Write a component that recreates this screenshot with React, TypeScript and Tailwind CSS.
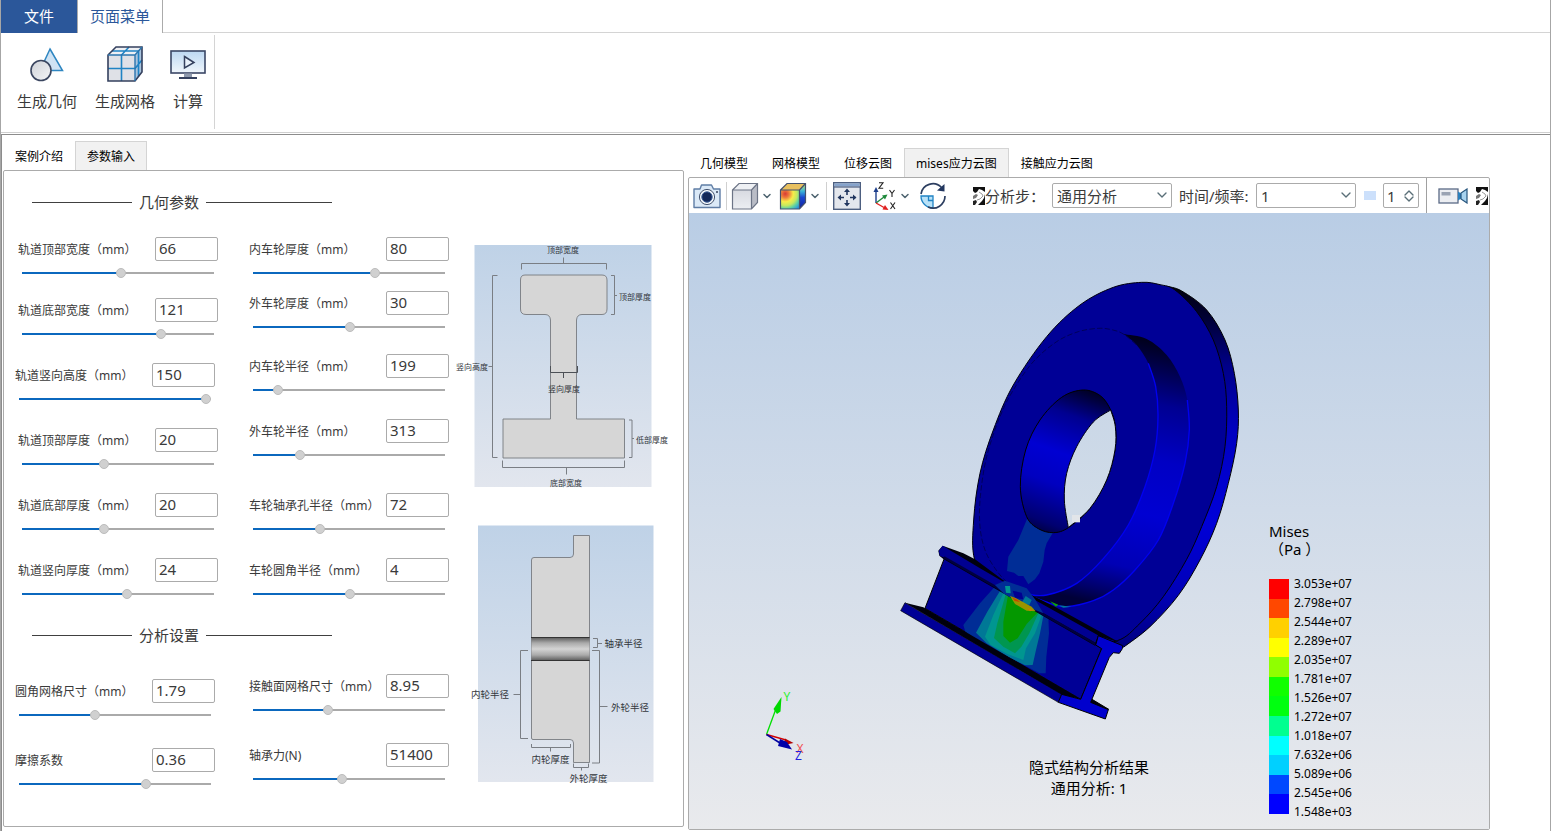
import { useId, useState } from 'react';
import type { ReactNode } from 'react';
import { ChevronDown, ChevronUp } from 'lucide-react';

type Point = [number, number];

/** Catmull-Rom spline through the points, written as cubic Bezier segments. */
function smooth(points: Point[], closed = false): string {
  const n = points.length;
  const at = (i: number): Point =>
    closed ? points[(i + n) % n] : points[Math.max(0, Math.min(n - 1, i))];
  let d = `M${points[0][0]} ${points[0][1]}`;
  const count = closed ? n : n - 1;
  for (let i = 0; i < count; i++) {
    const [a, b, c, e] = [at(i - 1), at(i), at(i + 1), at(i + 2)];
    d += `C${b[0] + (c[0] - a[0]) / 6} ${b[1] + (c[1] - a[1]) / 6} ${c[0] - (e[0] - b[0]) / 6} ${
      c[1] - (e[1] - b[1]) / 6
    } ${c[0]} ${c[1]}`;
  }
  return closed ? d + 'Z' : d;
}

/* ---------- icons ---------- */

function GeometryIcon() {
  return (
    <svg viewBox="0 0 36 36" className="size-9" aria-hidden="true">
      <defs>
        <linearGradient id="geoBall" x1="0" y1="0" x2="1" y2="1">
          <stop offset="0" stopColor="#cfd2d8" />
          <stop offset="1" stopColor="#f4f5f7" />
        </linearGradient>
      </defs>
      <path d="M21 3 L33.500 24.500 H11 Z" fill="#cfe3f4" stroke="#2e86c1" strokeWidth="1.500" />
      <circle cx="12" cy="24.500" r="10" fill="url(#geoBall)" stroke="#3b4660" strokeWidth="1.600" />
    </svg>
  );
}

function MeshIcon() {
  return (
    <svg viewBox="0 0 36 36" className="size-9" aria-hidden="true">
      <path d="M1 9 L9 1 H35 L28 9 Z" fill="#eef0f4" />
      <path d="M1 9 H28 V35 H1 Z" fill="#dfe1e7" />
      <path d="M28 9 L35 1 V26 L28 35 Z" fill="#a9c4de" />
      <path
        d="M14.500 35 V9 L22 1 M1 22.500 H28 L35 14 M5 5 H31.500 V30.500"
        fill="none"
        stroke="#1f83c4"
        strokeWidth="1.600"
      />
      <path
        d="M1 9 L9 1 H35 V26 L28 35 H1 Z"
        fill="none"
        stroke="#34405e"
        strokeWidth="1.600"
      />
      <path d="M1 9 H28 V35 M28 9 L35 1" fill="none" stroke="#2b75ae" strokeWidth="1.400" />
    </svg>
  );
}

function ComputeIcon() {
  return (
    <svg viewBox="0 0 36 36" className="size-9" aria-hidden="true">
      <defs>
        <linearGradient id="screen" x1="0" y1="0" x2="0" y2="1">
          <stop offset="0" stopColor="#bcd8f2" />
          <stop offset="1" stopColor="#f0f6fc" />
        </linearGradient>
      </defs>
      <rect x="1" y="5" width="34" height="22" fill="url(#screen)" stroke="#3a4766" strokeWidth="1.600" />
      <path d="M14.500 10.500 L24 16.500 L14.500 22 Z" fill="#e8f1fb" stroke="#34405e" strokeWidth="1.500" />
      <path d="M14 27.500 H22 V31 H14 Z" fill="#8e99ad" />
      <path d="M9 32 H27" stroke="#34405e" strokeWidth="2" />
    </svg>
  );
}

function CameraIcon() {
  return (
    <svg viewBox="0 0 28 26" className="h-[26px] w-7" aria-hidden="true">
      <path
        d="M1 6 H7 L8.500 2 H18.500 L20.500 6 H27 V24.500 H1 Z"
        fill="#dbe9f7"
        stroke="#5f7da5"
        strokeWidth="1.400"
        strokeLinejoin="round"
      />
      <circle cx="14" cy="14" r="7.600" fill="#f3f7fb" stroke="#44536f" strokeWidth="1" />
      <circle cx="14" cy="14" r="5.200" fill="#14295a" stroke="#3d5f98" strokeWidth="1" />
      <circle cx="24" cy="9" r="1" fill="#34405e" />
    </svg>
  );
}

function CubeIcon({ colored = false }: { colored?: boolean }) {
  return (
    <svg viewBox="0 0 28 28" className="size-7" aria-hidden="true">
      <defs>
        <radialGradient id="stress" cx="0.250" cy="0.200" r="1">
          <stop offset="0" stopColor="#d83a34" />
          <stop offset="0.200" stopColor="#ee7a3c" />
          <stop offset="0.420" stopColor="#f7ec4a" />
          <stop offset="0.620" stopColor="#c4e860" />
          <stop offset="0.800" stopColor="#58cfa8" />
          <stop offset="1" stopColor="#2a90e0" />
        </radialGradient>
        <linearGradient id="stressSide" x1="0" y1="0" x2="0" y2="1">
          <stop offset="0" stopColor="#d8e45a" />
          <stop offset="0.300" stopColor="#3ab6d8" />
          <stop offset="0.550" stopColor="#1a48d0" />
          <stop offset="1" stopColor="#1020a0" />
        </linearGradient>
        <linearGradient id="plainFace" x1="0" y1="0" x2="0" y2="1">
          <stop offset="0" stopColor="#d8dae1" />
          <stop offset="1" stopColor="#eceef2" />
        </linearGradient>
      </defs>
      <path d="M1.500 8 L8 1.500 H26.500 L20.500 8 Z" fill={colored ? '#e8c060' : '#eef0f4'} />
      <path d="M1.500 8 H20.500 V27 H1.500 Z" fill={colored ? 'url(#stress)' : 'url(#plainFace)'} />
      <path d="M20.500 8 L26.500 1.500 V20.500 L20.500 27 Z" fill={colored ? 'url(#stressSide)' : '#b9bcc6'} />
      <path
        d="M1.500 8 L8 1.500 H26.500 V20.500 L20.500 27 H1.500 Z M1.500 8 H20.500 V27 M20.500 8 L26.500 1.500"
        fill="none"
        stroke={colored ? '#44506c' : '#6c7486'}
        strokeWidth="1.200"
      />
    </svg>
  );
}

function FitIcon() {
  return (
    <svg viewBox="0 0 28 28" className="size-7" aria-hidden="true">
      <rect x="0.700" y="0.700" width="26.600" height="26.600" fill="#e4e7ed" stroke="#4d5f80" strokeWidth="1.400" />
      <rect x="1.400" y="1.400" width="25.200" height="3" fill="#86a3cb" />
      <path d="M1 5 H27" stroke="#4d5f80" strokeWidth="1.200" />
      <path d="M14 8 V13 M14 18 V23 M6 15.500 H11 M17 15.500 H22.500" stroke="#22365f" strokeWidth="1.600" />
      <path
        d="M14 6.500 L17 10 H11 Z M14 24.500 L17 21 H11 Z M4.500 15.500 L8 12.500 V18.500 Z M23.500 15.500 L20 12.500 V18.500 Z"
        fill="#22365f"
      />
    </svg>
  );
}

function AxesIcon() {
  return (
    <svg viewBox="0 0 24 28" className="h-7 w-6" aria-hidden="true">
      <path d="M3 21 V8" stroke="#1d3f8c" strokeWidth="1.400" />
      <path d="M3 5 L5.500 10 H0.500 Z" fill="#1d3f8c" />
      <path d="M3 21 L11 15" stroke="#1f8a3c" strokeWidth="1.400" />
      <path d="M14.500 12.500 L12 17.500 L9 13.500 Z" fill="#1f8a3c" />
      <path d="M3 21 L11 25.500" stroke="#e02020" strokeWidth="1.400" />
      <path d="M15.500 28 L9.500 27.500 L12 23 Z" fill="#e02020" />
      <path
        d="M6 0.800 H10 L6 6.200 H10.200 M16.500 8 L19 11.500 V15 M21.500 8 L19 11.500 M17.500 20.500 L22 27 M22 20.500 L17.500 27"
        fill="none"
        stroke="#222"
        strokeWidth="1.100"
      />
    </svg>
  );
}

function RotateIcon() {
  return (
    <svg viewBox="0 0 28 28" className="size-7" aria-hidden="true">
      <path d="M2 14 H14 V26 A12 12 0 0 1 2 14 Z" fill="#b9e2f8" stroke="#1f83c4" strokeWidth="1.300" />
      <path d="M9.500 14 V18.500 H14" fill="none" stroke="#1f83c4" strokeWidth="1.300" />
      <path d="M2 12 A12 12 0 0 1 22.500 5.500" fill="none" stroke="#2c3e60" strokeWidth="1.700" />
      <path d="M25.500 2 L25.500 9.500 L18 8.500 Z" fill="#22365f" />
      <path d="M26 14 A12 12 0 0 1 9 25" fill="none" stroke="#2c3e60" strokeWidth="1.700" />
    </svg>
  );
}

function NoiseIcon() {
  return (
    <svg viewBox="0 0 12 18" className="h-[18px] w-3 shrink-0" aria-hidden="true">
      <rect width="12" height="18" fill="#fff" />
      <path d="M0 0 H12 V5 L9 3 L6 2 L4 5 L2 6 L0 4 Z" fill="#111" />
      <path d="M12 7 V18 H5 L9 14 L11 11 Z" fill="#111" />
      <path d="M0 9 L3 7 L5 8 L3 11 L0 12 Z" fill="#777" />
      <path d="M0 14 L3 13 L4 15 L2 18 H0 Z" fill="#222" />
      <path d="M6 5 L9 7 L10 9 L7 12 L4 13" fill="none" stroke="#999" strokeWidth="1" />
    </svg>
  );
}

function VideoIcon() {
  return (
    <svg viewBox="0 0 30 16" className="h-4 w-[30px]" aria-hidden="true">
      <rect x="1" y="1" width="19" height="14" fill="#eceef2" stroke="#5b6a86" strokeWidth="1.300" />
      <rect x="3.500" y="4" width="9" height="3.500" fill="#9aa3b3" />
      <path d="M20 3.500 L24 6 V10 L20 12.500 Z" fill="#2a80bd" />
      <path d="M29 1 V15 L23 11 V5 Z" fill="#a8d3ef" stroke="#26547c" strokeWidth="1.200" />
    </svg>
  );
}

/* ---------- parameter form ---------- */

interface Param {
  label: string;
  value: string;
  /** slider position, 0 to 100 */
  pos: number;
  gap?: string;
  outdent?: boolean;
}

const trackLeft: Param[] = [
  { label: '轨道顶部宽度（mm）', value: '66', pos: 51.5 },
  { label: '轨道底部宽度（mm）', value: '121', pos: 73.5, gap: 'mt-[17px]' },
  { label: '轨道竖向高度（mm）', value: '150', pos: 100, gap: 'mt-[21px]', outdent: true },
  { label: '轨道顶部厚度（mm）', value: '20', pos: 42.5, gap: 'mt-[21px]' },
  { label: '轨道底部厚度（mm）', value: '20', pos: 42.5, gap: 'mt-[21px]' },
  { label: '轨道竖向厚度（mm）', value: '24', pos: 55, gap: 'mt-[21px]' },
];

const wheelRight: Param[] = [
  { label: '内车轮厚度（mm）', value: '80', pos: 64.5 },
  { label: '外车轮厚度（mm）', value: '30', pos: 50.5, gap: 'mt-[10px]' },
  { label: '内车轮半径（mm）', value: '199', pos: 11, gap: 'mt-[19px]' },
  { label: '外车轮半径（mm）', value: '313', pos: 23, gap: 'mt-[21px]' },
  { label: '车轮轴承孔半径（mm）', value: '72', pos: 34, gap: 'mt-[30px]' },
  { label: '车轮圆角半径（mm）', value: '4', pos: 50.5, gap: 'mt-[21px]' },
];

const analysisLeft: Param[] = [
  { label: '圆角网格尺寸（mm）', value: '1.79', pos: 39, outdent: true },
  { label: '摩擦系数', value: '0.36', pos: 67, gap: 'mt-[25px]', outdent: true },
];

const analysisRight: Param[] = [
  { label: '接触面网格尺寸（mm）', value: '8.95', pos: 38.5 },
  { label: '轴承力(N)', value: '51400', pos: 46, gap: 'mt-[25px]' },
];

function Field({ label, value, pos, gap = '', outdent = false }: Param) {
  const id = useId();
  const [text, setText] = useState(value);
  const [slider, setSlider] = useState(pos);
  const stop = `calc(5px + (100% - 10px) * ${slider / 100})`;
  return (
    <div className={`w-[200px] ${outdent ? '' : 'ml-[3px]'} ${gap}`}>
      <div className="flex h-6 items-center justify-between">
        <label htmlFor={id} className="whitespace-nowrap pt-[2px] text-[12px] leading-6">
          {label}
        </label>
        <input
          id={id}
          value={text}
          onChange={(e) => setText(e.target.value)}
          className="h-6 w-[63px] shrink-0 rounded-[2px] border border-[#ababab] bg-white px-[3px] pb-[2px] text-[15px] leading-5 outline-none"
        />
      </div>
      <input
        type="range"
        min={0}
        max={100}
        step={0.5}
        value={slider}
        aria-label={label}
        onChange={(e) => setSlider(Number(e.target.value))}
        style={{ backgroundImage: `linear-gradient(to right, #0b68be ${stop}, #aaaaaa ${stop})` }}
        className="mt-1 ml-1 block h-4 w-48 appearance-none bg-[length:100%_2px] bg-center bg-no-repeat [&::-webkit-slider-thumb]:size-[10px] [&::-webkit-slider-thumb]:appearance-none [&::-webkit-slider-thumb]:rounded-full [&::-webkit-slider-thumb]:border [&::-webkit-slider-thumb]:border-[#bcbcbc] [&::-webkit-slider-thumb]:bg-[#d0d0d0]"
      />
    </div>
  );
}

function SectionTitle({ children }: { children: ReactNode }) {
  return (
    <div className="ml-[17px] flex items-center gap-[7px]">
      <span className="h-px w-[100px] bg-[#404040]" />
      <h2 className="text-[15px] leading-5">{children}</h2>
      <span className="h-px w-[126px] bg-[#404040]" />
    </div>
  );
}

/* ---------- section drawings ---------- */

function RailDrawing() {
  return (
    <svg viewBox="454 242 216 248" className="h-[248px] w-[216px]" role="img" aria-label="轨道截面">
      <defs>
        <linearGradient id="railBg" x1="0" y1="0" x2="0" y2="1">
          <stop offset="0" stopColor="#bfd2e7" />
          <stop offset="1" stopColor="#e2e6ee" />
        </linearGradient>
      </defs>
      <rect x="474.500" y="245" width="177" height="242" fill="url(#railBg)" />
      <path
        d="M525 275 H602 Q607 275 607 280 V309 Q607 314.500 602 314.500 H582 Q577 314.500 576.500 320 V419 H624.500 V458 H503 V419 H550.500 V320 Q550 314.500 545 314.500 H526 Q520.500 314.500 520.500 309 V280 Q520.500 275 525 275 Z"
        fill="#d6d6d6"
        stroke="#777b80"
        strokeWidth="0.900"
      />
      <g fill="none" stroke="#7a7e84" strokeWidth="1">
        <path d="M521.500 269.500 V263.500 H606.500 V269.500 M563.500 263.500 V257.500" />
        <path d="M611 275.500 H614.500 V314.500 H611 M614.500 295.500 H617" />
        <path d="M497.500 275.500 H492.500 V457.500 H497.500 M492.500 366.500 H488.500" />
        <path d="M550.500 366 V372.500 H577.500 V366 M563.500 372.500 V378" stroke="#4c5056" />
        <path d="M629 420 H632 V457.500 H629 M632 438.500 H634" />
        <path d="M502.500 460.500 V467.500 H624.500 V460.500 M566.500 467.500 V474.500" />
      </g>
      <g fontSize="8" fill="#33373c" dominantBaseline="central">
        <text x="563" y="249.500" textAnchor="middle">顶部宽度</text>
        <text x="619" y="296">顶部厚度</text>
        <text x="488" y="366.500" textAnchor="end">竖向高度</text>
        <text x="564" y="388" textAnchor="middle">竖向厚度</text>
        <text x="636" y="439">低部厚度</text>
        <text x="566" y="482" textAnchor="middle">底部宽度</text>
      </g>
    </svg>
  );
}

function WheelDrawing() {
  return (
    <svg viewBox="454 522 216 266" className="h-[266px] w-[216px]" role="img" aria-label="车轮截面">
      <defs>
        <linearGradient id="bore" x1="0" y1="0" x2="0" y2="1">
          <stop offset="0" stopColor="#555" />
          <stop offset="0.250" stopColor="#aaa" />
          <stop offset="0.500" stopColor="#d4d4d4" />
          <stop offset="0.750" stopColor="#aaa" />
          <stop offset="1" stopColor="#555" />
        </linearGradient>
      </defs>
      <rect x="478" y="525.500" width="175.500" height="256.500" fill="url(#railBg)" />
      <path
        d="M573.500 535.500 H589.500 V762.500 H573.500 V743 Q573.500 739.500 570 739.500 H533 Q531.500 739.500 531.500 738 V560 Q531.500 557.500 534 557.500 H570 Q573.500 557.500 573.500 554 Z"
        fill="#d6d6d6"
        stroke="#777b80"
        strokeWidth="0.900"
      />
      <rect x="531.500" y="637" width="58" height="24" fill="url(#bore)" />
      <path d="M531 637.500 H589.500 M531 660.500 H589.500" stroke="#333" strokeWidth="1" />
      <g fill="none" stroke="#7a7e84" strokeWidth="1">
        <path d="M593 638.500 H597.500 V647.500 H593 M597.500 643.500 H602" />
        <path d="M592 650.500 H599.500 V763 H592 M599.500 706.500 H607.500" />
        <path d="M528 650.500 H520.500 V738.500 H528 M520.500 694.500 H513.500" />
        <path d="M531.500 744 V747.500 H570.500 V744 M550.500 747.500 V751.500" />
        <path d="M573.500 763.500 V767.500 H588.500 V763.500 M581.500 767.500 V770.500" />
      </g>
      <g fontSize="9.500" fill="#33373c" dominantBaseline="central">
        <text x="604.500" y="643.500">轴承半径</text>
        <text x="471" y="694.500">内轮半径</text>
        <text x="611" y="707">外轮半径</text>
        <text x="550.500" y="759" textAnchor="middle">内轮厚度</text>
        <text x="588.500" y="778.500" textAnchor="middle">外轮厚度</text>
      </g>
    </svg>
  );
}

/* ---------- stress plot ---------- */

const rimFront: Point[] = [
  [785, 67], [840, 74], [885, 90], [950, 155], [1000, 240], [1030, 340], [1040, 440], [1035, 560],
  [1010, 680], [965, 800], [920, 898], [850, 1010], [780, 1090], [712, 1142], [600, 1150], [450, 1080],
  [340, 1000], [284, 900], [281, 780], [300, 640], [340, 510], [400, 375], [500, 230], [600, 135], [700, 82],
];
const rimBack: Point[] = [
  [860, 79], [905, 93], [980, 150], [1035, 240], [1063, 340], [1075, 450], [1070, 550], [1045, 670],
  [1010, 790], [960, 900], [895, 1006], [810, 1100], [730, 1162],
];
const bossFront: Point[] = [
  [655, 205], [695, 209], [730, 222], [770, 255], [805, 310], [827, 380], [834, 470], [825, 570], [795, 680],
  [745, 795], [670, 896], [590, 970], [500, 1005], [440, 1003], [385, 970], [345, 925], [315, 870], [300, 800],
  [301, 710], [320, 590], [360, 470], [400, 390], [460, 305], [530, 245], [595, 215],
];
const bossBack: Point[] = [
  [730, 222], [800, 237], [860, 285], [900, 350], [922, 420], [928, 510], [915, 610], [880, 730], [835, 840],
  [765, 930], [700, 990], [640, 1022], [560, 1040], [510, 1030], [440, 1003],
];
const boreFront: Point[] = [
  [610, 390], [545, 412], [480, 480], [437, 570], [421, 680], [440, 770], [475, 806], [520, 818], [565, 803],
  [630, 745], [680, 660], [705, 570], [706, 500], [692, 450], [662, 408],
];
const openingFar: Point[] = [[692, 450], [640, 486], [590, 560], [560, 640], [553, 720], [565, 803]];
const openingNear: Point[] = [[565, 803], [630, 745], [680, 660], [705, 570], [706, 500], [692, 450]];

function StressModel() {
  return (
    <svg viewBox="689 213 800 616" className="absolute inset-0 size-full" role="img" aria-label="mises应力云图">
      <defs>
        <linearGradient id="rimShade" gradientUnits="userSpaceOnUse" x1="0" y1="80" x2="0" y2="1160">
          <stop offset="0" stopColor="#000010" />
          <stop offset="0.080" stopColor="#000030" />
          <stop offset="0.220" stopColor="#000088" />
          <stop offset="0.400" stopColor="#0000c0" />
          <stop offset="0.650" stopColor="#0000d8" />
          <stop offset="0.850" stopColor="#0000b8" />
          <stop offset="1" stopColor="#000080" />
        </linearGradient>
        <linearGradient id="bossShade" gradientUnits="userSpaceOnUse" x1="880" y1="230" x2="700" y2="1040">
          <stop offset="0" stopColor="#00000c" />
          <stop offset="0.100" stopColor="#000040" />
          <stop offset="0.250" stopColor="#000092" />
          <stop offset="0.450" stopColor="#0000c4" />
          <stop offset="0.650" stopColor="#0000d2" />
          <stop offset="0.850" stopColor="#0000b4" />
          <stop offset="0.950" stopColor="#000068" />
          <stop offset="1" stopColor="#000038" />
        </linearGradient>
        <linearGradient id="boreShade" gradientUnits="userSpaceOnUse" x1="640" y1="390" x2="480" y2="830">
          <stop offset="0" stopColor="#00001c" />
          <stop offset="0.200" stopColor="#000090" />
          <stop offset="0.450" stopColor="#0000d2" />
          <stop offset="0.650" stopColor="#0000c0" />
          <stop offset="0.900" stopColor="#000070" />
          <stop offset="1" stopColor="#000030" />
        </linearGradient>
        <linearGradient id="openSky" gradientUnits="userSpaceOnUse" x1="0" y1="450" x2="0" y2="800">
          <stop offset="0" stopColor="#cad7e7" />
          <stop offset="1" stopColor="#d1dce8" />
        </linearGradient>
      </defs>

      <g transform="translate(880 260) scale(0.33333)" strokeLinejoin="round">
        {/* wheel */}
        <path d={`${smooth(rimBack)}L600 1100L700 500Z`} fill="url(#rimShade)" />
        <path d={smooth(rimBack)} fill="none" stroke="#000" strokeWidth="3" />
        <path d={smooth(rimFront, true)} fill="#000096" stroke="#00000c" strokeWidth="3" />
        <path d={`${smooth(bossBack)}L500 900L700 500Z`} fill="url(#bossShade)" />
        <path d={smooth(bossBack.slice(4))} fill="none" stroke="#0000f0" strokeWidth="4" />
        <path d={smooth(bossFront, true)} fill="#000096" />
        <path d={smooth(bossFront.slice(4, 14))} fill="none" stroke="#0000f0" strokeWidth="4" />
        <path
          d={smooth([...bossFront.slice(13), ...bossFront.slice(0, 4)])}
          fill="none"
          stroke="#00003c"
          strokeWidth="2"
          strokeDasharray="16 7"
        />
        <path
          d="M442 775 L415 840 L385 890 L381 933 L402 938 L415 948 L430 948 L445 973 L465 958 L478 940 L490 905 L494 870 L500 850 L522 812 L470 800 Z"
          fill="#002d96"
        />
        <path d={smooth(boreFront, true)} fill="url(#boreShade)" stroke="#000" strokeWidth="3" />
        <path
          d={`${smooth(openingFar)}${smooth(openingNear).replace('M', 'L')}Z`}
          fill="url(#openSky)"
          stroke="#00000c"
          strokeWidth="3"
        />
        <rect x="576" y="765" width="24" height="22" fill="#e2e5e9" />

        {/* rail */}
        <path d="M195 890 L665 1165 L602 1318 L135 1045 Z" fill="#000096" stroke="#000" strokeWidth="3" />
        <path
          d="M355 968 L300 1030 L250 1095 L256 1115 L290 1140 L385 1190 L478 1240 L497 1240 L499 1190 L507 1120 L505 1070 Z"
          fill="#002d96"
        />
        <path d="M365 985 L322 1055 L288 1118 L320 1150 L385 1190 L435 1216 L458 1215 L468 1170 L480 1120 L490 1068 Z" fill="#007896" />
        <path d="M372 995 L340 1065 L315 1130 L332 1155 L382 1182 L430 1200 L438 1165 L465 1120 L486 1062 Z" fill="#009690" />
        <path d="M378 1000 L352 1090 L342 1134 L370 1160 L405 1180 L424 1160 L448 1120 L475 1060 Z" fill="#009650" />
        <path d="M384 1006 L370 1085 L370 1128 L390 1148 L413 1135 L440 1092 L474 1056 Z" fill="#049800" />
        <path
          d="M188 857 L175 872 L178 887 L190 897 L645 1157 L665 1130 L720 1148 L530 1043 L380 968 L285 898 L250 880 Z"
          fill="#00000c"
        />
        <path d="M188 857 L176 873 L180 888 L198 895 L646 1148 L654 1126 L450 1012 L300 925 L215 874 Z" fill="#000091" />
        <path d="M192 892 L646 1152" fill="none" stroke="#000040" strokeWidth="7" />
        <path d="M345 975 L375 962 L440 985 L465 1018 L490 1060 L430 1035 L370 1000 Z" fill="#002d96" />
        <path d="M375 978 L390 978 L392 1000 L378 998 Z" fill="#009690" />
        <path d="M437 1008 L455 1020 L448 1035 L425 1028 Z" fill="#007896" />
        <path d="M398 992 L425 998 L430 1018 L405 1014 Z" fill="#000091" />
        <path d="M390 1008 L405 1013 L455 1040 L467 1054 L440 1052 L405 1032 Z" fill="#9a9400" />
        <path d="M396 1012 L412 1019 L420 1026 L404 1023 Z" fill="#c84400" />
        <path d="M440 1042 L460 1050 L450 1054 Z" fill="#c08000" />
        <path d="M510 1024 L535 1034 L528 1040 Z" fill="#0ca010" />
        <path d="M535 1036 L575 1040 L550 1043 Z" fill="#007896" />
        <path d="M75 1028 L130 1042 L604 1318 L545 1305 Z" fill="#00000c" />
        <path d="M75 1028 L62 1052 L535 1327 L545 1303 L100 1043 Z" fill="#000096" stroke="#000" strokeWidth="2" />
        <path d="M636 1318 L686 1348 L630 1330 Z" fill="#00000c" stroke="#000" strokeWidth="3" />
        <path
          d="M655 1127 L728 1157 L727 1166 L718 1180 L700 1178 L688 1192 L632 1327 L685 1349 L676 1377 L535 1327 L545 1303 L602 1318 L665 1166 L647 1155 Z"
          fill="#0000cd"
          stroke="#000"
          strokeWidth="3"
        />
      </g>

      {/* orientation triad */}
      <path d="M766.500 734.500 L777 706" stroke="#00e000" strokeWidth="1.300" />
      <path d="M781.500 697 L780.500 711.500 L777 714 L773.500 709 Z" fill="#00d800" />
      <path d="M766.500 734.500 L786 740" stroke="#d00000" strokeWidth="1.300" />
      <path d="M793.500 743 L784 745 L785 738.500 Z" fill="#b00000" />
      <path d="M766.500 734.500 L780 743" stroke="#0000a0" strokeWidth="1.500" />
      <path d="M792 749.500 L778 746 L780 739 L787 742 Z" fill="#0000a8" />
      <g fontSize="12" textAnchor="middle" dominantBaseline="central">
        <text x="787" y="696.500" fill="#30f030">Y</text>
        <text x="800" y="748.500" fill="#f05050">X</text>
        <text x="798.500" y="755.500" fill="#2020e0">Z</text>
      </g>
    </svg>
  );
}

const legendColors = [
  'bg-[#ff0000]', 'bg-[#ff4800]', 'bg-[#ffd000]', 'bg-[#ffff00]', 'bg-[#90ff00]', 'bg-[#10ff00]',
  'bg-[#00ff10]', 'bg-[#00ff90]', 'bg-[#00ffff]', 'bg-[#00d0ff]', 'bg-[#0048ff]', 'bg-[#0000ff]',
];
const legendValues = [
  '3.053e+07', '2.798e+07', '2.544e+07', '2.289e+07', '2.035e+07', '1.781e+07', '1.526e+07', '1.272e+07',
  '1.018e+07', '7.632e+06', '5.089e+06', '2.545e+06', '1.548e+03',
];

function Legend() {
  return (
    <div className="absolute right-[137px] bottom-2 text-black">
      <p className="text-[15px] leading-[18px]">Mises</p>
      <p className="text-[15px] leading-[18px]">（Pa ）</p>
      <div className="mt-4 flex gap-[5px]">
        <div className="mt-[5px] mb-[7px] flex w-5 flex-col">
          {legendColors.map((c) => (
            <span key={c} className={`flex-1 ${c}`} />
          ))}
        </div>
        <ul className="text-[12px] leading-[19px]">
          {legendValues.map((v) => (
            <li key={v}>{v}</li>
          ))}
        </ul>
      </div>
    </div>
  );
}

/* ---------- shell ---------- */

function RibbonButton({ icon, label }: { icon: ReactNode; label: string }) {
  return (
    <button type="button" className="flex flex-col items-center gap-[9px]">
      {icon}
      <span className="text-[15px] leading-5">{label}</span>
    </button>
  );
}

function Tabs({ items, active }: { items: string[]; active: string }) {
  return (
    <div role="tablist" className="flex">
      {items.map((t) => (
        <button
          key={t}
          type="button"
          role="tab"
          aria-selected={t === active}
          className={`h-[29px] border border-b-0 px-[11px] pt-[2px] text-[12px] leading-5 text-black ${
            t === active ? 'border-[#d4d4d4] bg-[#f1f1f1]' : 'border-transparent'
          }`}
        >
          {t}
        </button>
      ))}
    </div>
  );
}

function Combo({ id, value, width }: { id: string; value: string; width: string }) {
  return (
    <div className={`relative shrink-0 ${width}`}>
      <select
        id={id}
        defaultValue={value}
        className="block h-[25px] w-full appearance-none rounded-[2px] border border-[#ababab] bg-white pl-1 text-[15px] leading-5 outline-none"
      >
        <option>{value}</option>
      </select>
      <ChevronDown className="pointer-events-none absolute top-1 right-[2px] size-4 text-[#5a6f78]" />
    </div>
  );
}

function MenuArrow({ label }: { label: string }) {
  return (
    <button type="button" aria-label={label} className="mx-[2px]">
      <ChevronDown className="size-3 text-[#4e6470]" strokeWidth={3} />
    </button>
  );
}

function Divider() {
  return <span className="h-7 w-px shrink-0 bg-[#d0d0d0]" />;
}

function Toolbar() {
  return (
    <div className="flex h-[35px] shrink-0 items-center overflow-hidden">
      <button type="button" aria-label="截图" className="mr-[5px] ml-1">
        <CameraIcon />
      </button>
      <Divider />
      <button type="button" aria-label="显示模式" className="ml-1">
        <CubeIcon />
      </button>
      <MenuArrow label="显示模式选项" />
      <button type="button" aria-label="云图模式" className="ml-1">
        <CubeIcon colored />
      </button>
      <MenuArrow label="云图模式选项" />
      <span className="ml-[3px] flex">
        <Divider />
      </span>
      <button type="button" aria-label="适应窗口" className="ml-[6px]">
        <FitIcon />
      </button>
      <button type="button" aria-label="视图方向" className="ml-3">
        <AxesIcon />
      </button>
      <MenuArrow label="视图方向选项" />
      <button type="button" aria-label="旋转" className="ml-[6px]">
        <RotateIcon />
      </button>
      <span className="ml-[26px] flex">
        <NoiseIcon />
      </span>
      <label htmlFor="step" className="w-[67px] shrink-0 whitespace-nowrap text-[15px] leading-5">
        分析步：
      </label>
      <Combo id="step" value="通用分析" width="w-[120px]" />
      <label htmlFor="freq" className="ml-[7px] w-[77px] shrink-0 whitespace-nowrap text-[15px] leading-5">
        时间/频率:
      </label>
      <Combo id="freq" value="1" width="w-[100px]" />
      <span className="ml-2 h-[9px] w-3 shrink-0 bg-[#cce0fb]" />
      <div className="relative ml-[7px] shrink-0">
        <input
          aria-label="帧"
          defaultValue="1"
          className="block h-[25px] w-9 rounded-[2px] border border-[#ababab] pl-[3px] text-[15px] leading-5 outline-none"
        />
        <div className="absolute inset-y-0 right-[2px] flex flex-col justify-center">
          <button type="button" aria-label="增加" className="h-[11px] overflow-hidden">
            <ChevronUp className="size-4 text-[#5a6f78]" />
          </button>
          <button type="button" aria-label="减少" className="flex h-[11px] items-end overflow-hidden">
            <ChevronDown className="size-4 text-[#5a6f78]" />
          </button>
        </div>
      </div>
      <span className="ml-[7px] h-full w-px shrink-0 bg-[#a0a0a0]" />
      <button type="button" aria-label="录制" className="ml-[11px] shrink-0">
        <VideoIcon />
      </button>
      <span className="ml-2 flex">
        <NoiseIcon />
      </span>
    </div>
  );
}

export default function App() {
  return (
    <div className="flex min-h-screen flex-col border-x border-[#a6a6a6] bg-white font-['Noto_Sans','Noto_Sans_CJK_SC',sans-serif] text-[#3a3a3a]">
      <header className="border-b border-[#d0d0d0]">
        <nav className="flex h-[33px] text-[15px] leading-5">
          <button type="button" className="w-[76px] bg-[#2b579a] pb-[2px] text-white">
            文件
          </button>
          <button type="button" className="w-[86px] border-r border-l border-[#ababab] pb-[2px] text-[#2b579a]">
            页面菜单
          </button>
          <span className="flex-1 border-b border-[#d4d4d4]" />
        </nav>
        <div className="flex h-[99px] pt-[2px] pb-[3px]">
          <div className="flex items-start gap-[15px] border-r border-[#d4d4d4] pt-[11px] pr-2 pl-4">
            <div className="flex gap-[18px]">
              <RibbonButton icon={<GeometryIcon />} label="生成几何" />
              <RibbonButton icon={<MeshIcon />} label="生成网格" />
            </div>
            <RibbonButton icon={<ComputeIcon />} label="计算" />
          </div>
        </div>
      </header>

      <main className="mt-px flex flex-1 gap-1 border-t border-l border-[#8c8c8c] pl-px">
        <section className="flex w-[681px] shrink-0 flex-col pt-[6px] pb-1">
          <Tabs items={['案例介绍', '参数输入']} active="参数输入" />
          <div className="flex flex-1 gap-[5px] rounded-[2px] border border-[#ababab] pl-[11px]">
            <div className="pt-[21px]">
              <SectionTitle>几何参数</SectionTitle>
              <div className="mt-[25px] flex gap-[28px]">
                <div className="w-[203px]">
                  {trackLeft.map((p) => (
                    <Field key={p.label} {...p} />
                  ))}
                </div>
                <div className="w-[203px]">
                  {wheelRight.map((p) => (
                    <Field key={p.label} {...p} />
                  ))}
                </div>
              </div>
              <div className="mt-[23px]">
                <SectionTitle>分析设置</SectionTitle>
              </div>
              <div className="mt-[29px] flex gap-[28px]">
                <div className="w-[203px] pt-[5px]">
                  {analysisLeft.map((p) => (
                    <Field key={p.label} {...p} />
                  ))}
                </div>
                <div className="w-[203px]">
                  {analysisRight.map((p) => (
                    <Field key={p.label} {...p} />
                  ))}
                </div>
              </div>
            </div>
            <div className="flex flex-col gap-8 pt-[71px]">
              <RailDrawing />
              <WheelDrawing />
            </div>
          </div>
        </section>

        <section className="mr-[60px] flex min-w-0 flex-1 flex-col pt-[13px] pb-px">
          <Tabs
            items={['几何模型', '网格模型', '位移云图', 'mises应力云图', '接触应力云图']}
            active="mises应力云图"
          />
          <div className="flex flex-1 flex-col rounded-[2px] border border-[#ababab]">
            <Toolbar />
            <div className="relative flex-1 overflow-hidden bg-linear-to-b from-[#b9cde5] to-[#e9eaed]">
              <StressModel />
              <Legend />
              <div className="absolute inset-x-0 bottom-[30px] text-center text-[15px] leading-[21px] text-black">
                <p>隐式结构分析结果</p>
                <p>通用分析: 1</p>
              </div>
            </div>
          </div>
        </section>
      </main>
    </div>
  );
}
